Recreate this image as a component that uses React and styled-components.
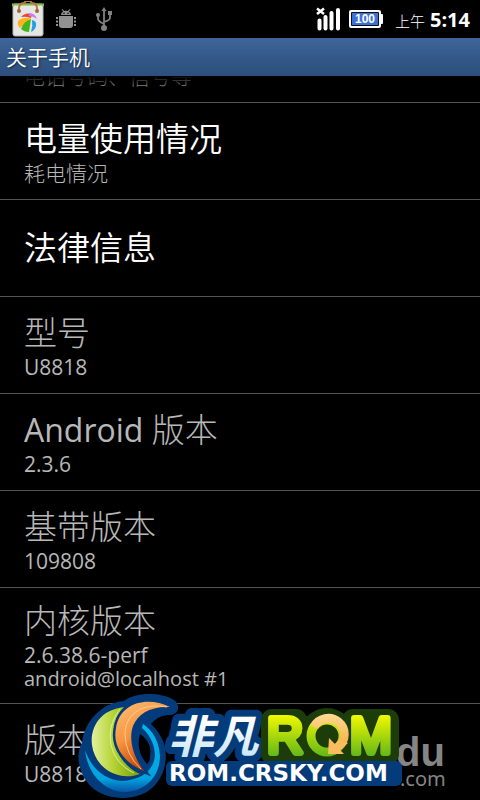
import React from "react";
import styled, { createGlobalStyle } from "styled-components";

const GlobalStyle = createGlobalStyle`
  * { box-sizing: border-box; }
  html, body { margin: 0; background: #000; }
  body { font-family: "Open Sans", "Noto Sans CJK SC", sans-serif; }
`;

const Screen = styled.div`
  position: relative;
  display: flex;
  flex-direction: column;
  height: 100vh;
  overflow: hidden;
  background: #000;
`;

const StatusBar = styled.header`
  display: flex;
  align-items: center;
  justify-content: space-between;
  flex: none;
  height: 38px;
  padding: 0 10px 0 12px;
`;

const IconGroup = styled.div`
  display: flex;
  align-items: center;
  gap: ${(p) => p.$gap}px;
`;

const Icon = styled.svg`
  display: block;
  flex: none;
`;

const Clock = styled.time`
  display: flex;
  align-items: baseline;
  gap: 5px;
  margin-left: 4px;
  padding-top: 2px;
  color: #fff;
  font-size: 20px;
  line-height: 24px;
  font-weight: 700;
`;

const Meridiem = styled.span`
  font-size: 15px;
  font-weight: 300;
`;

const TitleBar = styled.h1`
  flex: none;
  margin: 0;
  height: 38px;
  padding: 0 6px;
  background: linear-gradient(#40659b, #365b8c 40%, #2c4f7b);
  color: #fff;
  font-size: 21px;
  line-height: 38px;
  font-weight: 350;
  text-shadow: 1px 1px 2px #10233f;
`;

const ListView = styled.main`
  position: relative;
  flex: 1;
  min-height: 0;
  overflow: hidden;
  &::before {
    content: "";
    position: absolute;
    inset: 0 0 auto;
    height: 16px;
    background: linear-gradient(#000, transparent);
  }
`;

const List = styled.ul`
  list-style: none;
  margin: -70px 0 0;
  padding: 0;
`;

const Row = styled.li`
  display: flex;
  flex-direction: column;
  justify-content: center;
  min-height: 97px;
  padding: 11px 24px 12px;
  border-bottom: 1px solid #545454;
  color: ${(p) => (p.$active ? "#fff" : "#b8b8b8")};
`;

const RowTitle = styled.h2`
  margin: 0;
  font-size: 33px;
  line-height: 44px;
  font-weight: ${(p) => (p.$active ? 350 : 300)};
  &:only-child {
    line-height: 48px;
  }
`;

const Latin = styled.span`
  font-size: 32px;
  font-weight: 400;
`;

const Summary = styled.p`
  margin: 0;
  color: #b8b8b8;
  font-size: ${(p) => (p.$small ? 20 : 21)}px;
  line-height: 24px;
  font-weight: ${(p) => (p.$cjk ? 300 : 400)};
`;

const Watermark = styled.svg`
  position: absolute;
  left: 70px;
  bottom: 0;
  display: block;
`;

const items = [
  { title: "状态信息", summary: "电话号码、信号等", active: true, cjk: true },
  { title: "电量使用情况", summary: "耗电情况", active: true, cjk: true },
  { title: "法律信息", active: true },
  { title: "型号", summary: "U8818" },
  { latin: "Android ", title: "版本", summary: "2.3.6" },
  { title: "基带版本", summary: "109808" },
  { title: "内核版本", summary: "2.6.38.6-perf", detail: "android@localhost #1" },
  { title: "版本号", summary: "U8818" },
];

function BagIcon() {
  return (
    <Icon width="32" height="36" viewBox="0 0 32 36" aria-label="应用市场">
      <rect x="1" y="3" width="30" height="32" rx="2" fill="#e6e6e4" stroke="#b5b5b2" />
      <path d="M1 5V3.500h30V5" fill="none" stroke="#82b947" strokeWidth="2" />
      <path d="M7 11C6 4 9 2 12 2l2-2h4l2 2c3 0 6 2 5 9" fill="none" stroke="#b5793d" strokeWidth="2" />
      <circle cx="7" cy="10" r="2" fill="#9b6a3b" />
      <circle cx="25" cy="10" r="2" fill="#9b6a3b" />
      <path d="M9 16q4-5 11-3l-1 4q-5-2-10-1z" fill="#f0442c" />
      <path d="M17 12q6 0 8 6-4-3-8-3z" fill="#c67bf0" />
      <path d="M6 20q5-4 13-3L8 27q-3-3-2-7z" fill="#ffb21c" />
      <path d="M9 28q3-8 10-10l-2 13q-5 0-8-3z" fill="#42b51c" />
      <path d="M20 19q5 1 4 6-1 4-5 6 2-6 1-12z" fill="#249ee9" />
    </Icon>
  );
}

function BugIcon() {
  return (
    <Icon width="20" height="22" viewBox="0 0 20 22" fill="#929292" aria-label="USB 调试">
      <path d="M5 7q0-2.500 2.200-3.500L5.500 1.500l.7-.5L8.200 3q1.800-.4 3.600 0l2-2 .7.500-1.700 2Q15 4.500 15 7z" />
      <path d="M3 8h14v9q0 3-3 3H6q-3 0-3-3z" />
      <path d="M0 9h2v2H0zM0 12.500h2v2H0zM0 16h2v2H0zM18 9h2v2h-2zM18 12.500h2v2h-2zM18 16h2v2h-2z" />
      <circle cx="8" cy="5.200" r=".8" fill="#000" />
      <circle cx="12" cy="5.200" r=".8" fill="#000" />
    </Icon>
  );
}

function UsbIcon() {
  return (
    <Icon width="16" height="24" viewBox="0 0 16 24" aria-label="USB">
      <g fill="none" stroke="#828282" strokeWidth="1.800">
        <path d="M8 3v17M2 8v4q0 2 6 5M14 7v4q0 2-6 4" />
      </g>
      <g fill="#828282">
        <path d="M8 0l2.500 4h-5z" />
        <circle cx="2" cy="8" r="2" />
        <path d="M12 4h4v4h-4z" />
        <circle cx="8" cy="21" r="3" />
      </g>
    </Icon>
  );
}

function SignalIcon() {
  return (
    <Icon width="25" height="24" viewBox="0 0 25 24" aria-label="信号">
      <path d="M3.500 13.500v8M9.500 10v11.500M15.500 6v15.500M22 3v18.500" stroke="#fff" strokeWidth="4" strokeLinecap="round" />
      <path d="M1 1.500l7 5.500M8 1.500L1 7" stroke="#fff" strokeWidth="2.500" />
    </Icon>
  );
}

function BatteryIcon() {
  return (
    <Icon width="34" height="18" viewBox="0 0 34 18" aria-label="电池">
      <rect width="32" height="18" rx="2" fill="#fff" />
      <rect x="30" y="4" width="4" height="10" rx="1" fill="#fff" />
      <rect x="2" y="2" width="28" height="14" rx="1" fill="#111" />
      <rect x="3" y="3" width="26" height="12" fill="#3b72d8" />
      <text x="16" y="13" textAnchor="middle" fill="#fff" fontFamily="Liberation Sans, sans-serif" fontSize="12" fontWeight="700">100</text>
    </Icon>
  );
}

function Brand() {
  return (
    <Watermark width="410" height="110" viewBox="0 0 410 110">
      <defs>
        <linearGradient id="lime" x1="0" x2="1">
          <stop stopColor="#e3f09c" />
          <stop offset=".45" stopColor="#b4d433" />
          <stop offset="1" stopColor="#769c08" />
        </linearGradient>
        <linearGradient id="orange" x1="0" y1="0" x2=".5" y2="1">
          <stop stopColor="#ffc078" />
          <stop offset=".5" stopColor="#f79540" />
          <stop offset="1" stopColor="#b93b00" />
        </linearGradient>
        <linearGradient id="cyan" x1="0" y1="0" x2="0" y2="1">
          <stop stopColor="#00b5ed" />
          <stop offset=".8" stopColor="#00a3df" />
          <stop offset="1" stopColor="#0a55a5" />
        </linearGradient>
        <linearGradient id="ice" x1="0" y1="0" x2="0" y2="1">
          <stop offset=".3" stopColor="#fff" />
          <stop offset="1" stopColor="#b9e0f9" />
        </linearGradient>
        <linearGradient id="rom" gradientUnits="userSpaceOnUse" x1="0" y1="24" x2="0" y2="68">
          <stop stopColor="#f5fa00" />
          <stop offset="1" stopColor="#5cb51a" />
        </linearGradient>
        <linearGradient id="gold" gradientUnits="userSpaceOnUse" x1="0" y1="24" x2="0" y2="66">
          <stop stopColor="#ffd991" />
          <stop offset="1" stopColor="#f3a42c" />
        </linearGradient>
      </defs>

      <g fill="#858585">
        <text x="326" y="76" fontFamily="Liberation Sans, sans-serif" fontSize="40" fontWeight="700">du</text>
        <text x="330" y="96" fontFamily="Noto Sans, sans-serif" fontSize="20">.com</text>
      </g>

      <text
        x="98"
        y="63"
        fill="url(#ice)"
        stroke="#043b7b"
        strokeWidth="14"
        strokeLinejoin="round"
        paintOrder="stroke"
        fontFamily="Noto Sans CJK SC, sans-serif"
        fontSize="45"
        fontWeight="700"
        fontStyle="italic"
      >
        非凡
      </text>

      <path
        fill="#043b7b"
        d="M104 10C90 2 66 2 54 11 30 13 14 33 12 53 4 66 10 88 24 99c17 13 45 11 58-1 14-12 18-35 9-51-3-6-6-9-10-13 6-7 12-9 18-9 10 0 12-10 5-15z"
      />
      <path d="M15 60c3 26 21 42 40 42 23-1 35-18 35-36-1-16-8-26-17-32l-1 4c9 8 13 18 13 28-2 16-15 24-33 25-16-1-30-11-37-31z" fill="url(#cyan)" />
      <path d="M54 17C28 20 20 40 22 55c3 23 26 37 48 29C48 74 34 46 54 17z" fill="url(#lime)" />
      <path d="M50 19C32 42 40 72 64 83" fill="none" stroke="#edf6b7" strokeWidth=".8" />
      <path d="M100 17C78 6 50 12 46 38c-4 20 10 36 28 43-10-13-16-31-11-45 5-12 17-20 37-19z" fill="url(#orange)" stroke="#043b7b" strokeWidth="5" paintOrder="stroke" />
      <path d="M97 17C70 12 55 26 55 44q0 20 16 35" fill="none" stroke="#ffd5a0" strokeWidth=".8" />
      <path d="M70 44c8 5 12 14 10 22 0 4-1 6-3 8-8-9-10-20-7-30z" fill="#000" />

      <g fill="#1c3c09">
        <rect x="191" y="19" width="46" height="56" rx="11" />
        <circle cx="257" cy="46" r="28" />
        <rect x="272" y="19" width="57" height="56" rx="11" />
        <rect x="220" y="26" width="80" height="48" />
      </g>
      <g fontFamily="Liberation Sans, sans-serif" fontSize="50" strokeLinejoin="round" stroke="url(#rom)" strokeWidth="6" fill="url(#rom)">
        <text x="197" y="63">R</text>
        <text x="280" y="63">M</text>
      </g>
      <circle cx="257" cy="46" r="16" fill="none" stroke="url(#rom)" strokeWidth="9" />
      <path d="M244 37a16 16 0 1 1 24 20" fill="none" stroke="url(#gold)" strokeWidth="9" />
      <path d="M259 48l-1 16h16l-4-4 8-7-9-3-4 4z" fill="#f9bd5d" />

      <rect x="96" y="71" width="236" height="25" rx="6" fill="#043b7b" />
      <text x="99" y="91" fill="#fff" fontFamily="DejaVu Sans, sans-serif" fontSize="23" fontWeight="700">ROM.CRSKY.COM</text>
    </Watermark>
  );
}

export default function App() {
  return (
    <>
      <GlobalStyle />
      <Screen>
        <StatusBar>
          <IconGroup $gap={20}>
            <IconGroup $gap={12}>
              <BagIcon />
              <BugIcon />
            </IconGroup>
            <UsbIcon />
          </IconGroup>
          <IconGroup $gap={8}>
            <SignalIcon />
            <BatteryIcon />
            <Clock>
              <Meridiem>上午</Meridiem>5:14
            </Clock>
          </IconGroup>
        </StatusBar>
        <TitleBar>关于手机</TitleBar>
        <ListView>
          <List>
            {items.map((item) => (
              <Row key={item.title} $active={item.active}>
                <RowTitle $active={item.active}>
                  {item.latin && <Latin>{item.latin}</Latin>}
                  {item.title}
                </RowTitle>
                {item.summary && <Summary $cjk={item.cjk}>{item.summary}</Summary>}
                {item.detail && <Summary $small>{item.detail}</Summary>}
              </Row>
            ))}
          </List>
        </ListView>
        <Brand />
      </Screen>
    </>
  );
}
